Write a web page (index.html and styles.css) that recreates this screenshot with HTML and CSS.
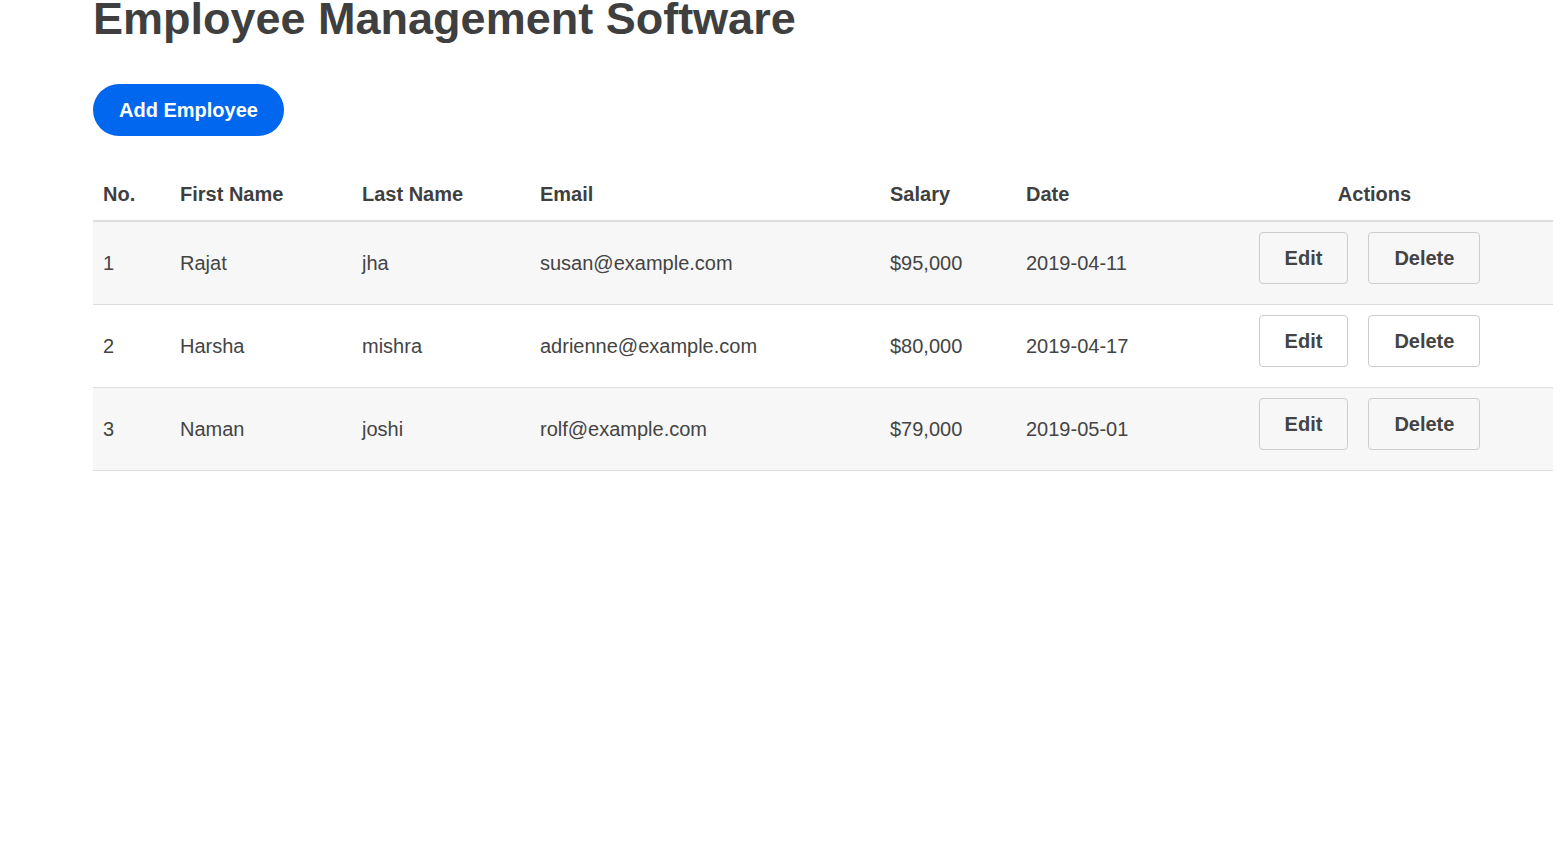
FILE: index.html
```html
<!DOCTYPE html>
<html lang="en">
<head>
<meta charset="utf-8">
<title>Employee Management Software</title>
<link rel="stylesheet" href="styles.css">
</head>
<body>
<div class="container">
  <h1 class="title">Employee Management Software</h1>
  <div class="toolbar">
    <button class="btn-primary">Add Employee</button>
  </div>
  <table class="emp-table">
    <colgroup>
      <col class="c-no"><col class="c-first"><col class="c-last"><col class="c-email"><col class="c-salary"><col class="c-date"><col class="c-actions">
    </colgroup>
    <thead>
      <tr>
        <th>No.</th><th>First Name</th><th>Last Name</th><th>Email</th><th>Salary</th><th>Date</th><th class="th-actions">Actions</th>
      </tr>
    </thead>
    <tbody>
      <tr>
        <td>1</td><td>Rajat</td><td>jha</td><td>susan@example.com</td><td>$95,000</td><td>2019-04-11</td>
        <td class="td-actions"><div class="actions"><button class="btn">Edit</button><button class="btn">Delete</button></div></td>
      </tr>
      <tr>
        <td>2</td><td>Harsha</td><td>mishra</td><td>adrienne@example.com</td><td>$80,000</td><td>2019-04-17</td>
        <td class="td-actions"><div class="actions"><button class="btn">Edit</button><button class="btn">Delete</button></div></td>
      </tr>
      <tr>
        <td>3</td><td>Naman</td><td>joshi</td><td>rolf@example.com</td><td>$79,000</td><td>2019-05-01</td>
        <td class="td-actions"><div class="actions"><button class="btn">Edit</button><button class="btn">Delete</button></div></td>
      </tr>
    </tbody>
  </table>
</div>
</body>
</html>
```
FILE: styles.css
```css
html, body {
  margin: 0;
  padding: 0;
  background: #fff;
}
body {
  font-family: "Liberation Sans", Arial, sans-serif;
  color: #444;
}
.container {
  padding-left: 93px;
  width: 1460px;
}
.title {
  font-size: 45px;
  font-weight: bold;
  margin: -7px 0 0 0;
  line-height: 52px;
  color: #3f3f3f;
}
.toolbar {
  margin-top: 39px;
  height: 52px;
}
.btn-primary {
  font-family: "Liberation Sans", Arial, sans-serif;
  font-size: 20px;
  font-weight: bold;
  color: #fff;
  background: #0067ee;
  border: none;
  border-radius: 26px;
  height: 52px;
  padding: 1px 26px 0;
  line-height: 23px;
  cursor: pointer;
}
.emp-table {
  margin-top: 32px;
  width: 1460px;
  border-collapse: collapse;
  table-layout: fixed;
}
.c-no { width: 77px; }
.c-first { width: 182px; }
.c-last { width: 178px; }
.c-email { width: 350px; }
.c-salary { width: 136px; }
.c-date { width: 180px; }
.c-actions { width: 357px; }
.emp-table th {
  font-size: 20px;
  font-weight: bold;
  text-align: left;
  padding: 1px 10px 0;
  height: 51px;
  border-bottom: 2px solid #ddd;
  color: #3f3f3f;
}
.emp-table th.th-actions {
  text-align: center;
}
.emp-table td {
  font-size: 20px;
  padding: 15px 10px;
  border-bottom: 1px solid #ddd;
  height: 52px;
  color: #444;
}
.emp-table tbody tr:nth-child(odd) {
  background: #f7f7f7;
}
.emp-table td.td-actions {
  padding: 10px 20px 20px 10px;
}
.actions {
  display: flex;
  justify-content: center;
  gap: 20px;
}
.btn {
  font-family: "Liberation Sans", Arial, sans-serif;
  font-size: 20px;
  font-weight: bold;
  color: #444;
  background: transparent;
  border: 1px solid #ccc;
  border-radius: 4px;
  height: 52px;
  padding: 0 25px;
  line-height: 23px;
  cursor: pointer;
}
```
